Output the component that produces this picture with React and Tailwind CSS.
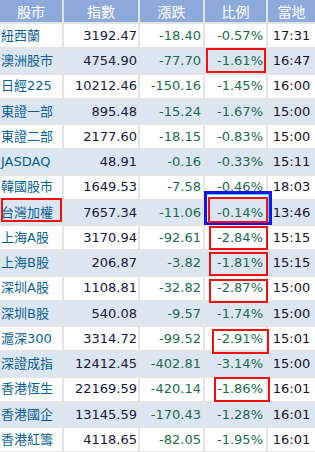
import React from "react";

const rows = [
  ["紐西蘭", "3192.47", "-18.40", "-0.57%", "17:31"],
  ["澳洲股市", "4754.90", "-77.70", "-1.61%", "16:47"],
  ["日經225", "10212.46", "-150.16", "-1.45%", "16:00"],
  ["東證一部", "895.48", "-15.24", "-1.67%", "15:00"],
  ["東證二部", "2177.60", "-18.15", "-0.83%", "15:00"],
  ["JASDAQ", "48.91", "-0.16", "-0.33%", "15:11"],
  ["韓國股市", "1649.53", "-7.58", "-0.46%", "18:03"],
  ["台灣加權", "7657.34", "-11.06", "-0.14%", "13:46"],
  ["上海A股", "3170.94", "-92.61", "-2.84%", "15:15"],
  ["上海B股", "206.87", "-3.82", "-1.81%", "15:15"],
  ["深圳A股", "1108.81", "-32.82", "-2.87%", "15:00"],
  ["深圳B股", "540.08", "-9.57", "-1.74%", "15:00"],
  ["滬深300", "3314.72", "-99.52", "-2.91%", "15:01"],
  ["深證成指", "12412.45", "-402.81", "-3.14%", "15:00"],
  ["香港恆生", "22169.59", "-420.14", "-1.86%", "16:01"],
  ["香港國企", "13145.59", "-170.43", "-1.28%", "16:01"],
  ["香港紅籌", "4118.65", "-82.05", "-1.95%", "16:01"],
];

const headers = ["股市", "指數", "漲跌", "比例", "當地"];

// hand drawn annotation boxes on top of the table
const redBoxes = [
  { left: 206, top: 48, width: 60, height: 25 },
  { left: 1, top: 198, width: 61, height: 24 },
  { left: 208, top: 197, width: 60, height: 26 },
  { left: 209, top: 226, width: 59, height: 24 },
  { left: 209, top: 252, width: 59, height: 24 },
  { left: 209, top: 279, width: 59, height: 24 },
  { left: 212, top: 329, width: 57, height: 25 },
  { left: 214, top: 377, width: 56, height: 25 },
];

export default function App() {
  return (
    <div
      className="relative w-[315px] h-[452px] overflow-hidden bg-[#e4e4e4] text-[13px]"
      style={{ fontFamily: '"DejaVu Sans", "Noto Sans CJK TC", sans-serif' }}
    >
      <div className="grid grid-cols-[62px_74px_63px_61px_1fr] grid-rows-[22px_repeat(17,23.25px)] gap-[2px]">
        {headers.map((h) => (
          <div
            key={h}
            className="bg-[#8eaadb] text-white text-[14px] flex items-center justify-center"
            style={{ fontFamily: '"Noto Sans CJK TC", sans-serif' }}
          >
            {h}
          </div>
        ))}
        {rows.map((r, i) => {
          const bg = i % 2 === 0 ? "bg-white" : "bg-[#dce6f2]";
          return (
            <React.Fragment key={r[0]}>
              <div className={`${bg} flex items-center pl-[1px] text-[#0c5f92] whitespace-nowrap`}>
                {r[0]}
              </div>
              <div className={`${bg} flex items-center justify-end pr-[1px] text-[#1b1640]`}>
                {r[1]}
              </div>
              <div className={`${bg} flex items-center justify-end pr-[2px] text-[#1d6a50]`}>
                {r[2]}
              </div>
              <div className={`${bg} flex items-center justify-end pr-[3px] text-[#1d6a50]`}>
                {r[3]}
              </div>
              <div className={`${bg} flex items-center justify-center text-[#1a0f30]`}>
                {r[4]}
              </div>
            </React.Fragment>
          );
        })}
      </div>

      <div className="absolute left-[204px] top-[191px] w-[68px] h-[34px] border-[3px] border-[#1414e6]">
        <div className="w-full h-full border-t border-r border-[#22e6f0]" />
      </div>
      {redBoxes.map((b, i) => (
        <div
          key={i}
          className="absolute border-2 border-[#f01010]"
          style={{ left: b.left, top: b.top, width: b.width, height: b.height }}
        />
      ))}
    </div>
  );
}
